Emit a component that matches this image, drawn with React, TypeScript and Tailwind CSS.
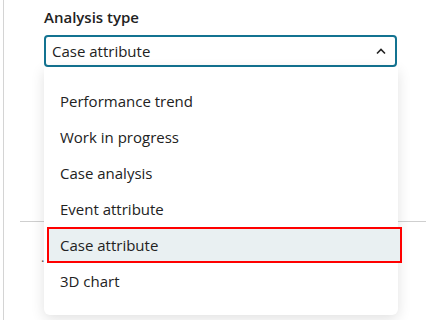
const options = [
  "Performance trend",
  "Work in progress",
  "Case analysis",
  "Event attribute",
  "Case attribute",
  "3D chart",
];

export default function App() {
  const selected = "Case attribute";
  return (
    <div
      className="h-[320px] w-[426px] overflow-hidden bg-white pl-[3px] text-[#222]"
      style={{ fontFamily: '"Open Sans", "Liberation Sans", sans-serif' }}
    >
      <div className="flex h-full flex-col border-l border-[#d4d4d4]">
        {/* field */}
        <div className="relative pl-[40px] pr-[29px] pt-[7px]">
          <div className="text-[15px] font-semibold leading-[20px]">Analysis type</div>
          <div className="mt-[8px] flex h-[32px] items-center justify-between rounded-[4px] border-2 border-[#137391] bg-white pl-[6px] pr-[8px]">
            <span className="text-[15px]">Case attribute</span>
            <svg width="12" height="8" viewBox="0 0 12 8" fill="none">
              <path d="M2 6.5L6 2.5L10 6.5" stroke="#222" strokeWidth="1.6" />
            </svg>
          </div>

          {/* open menu */}
          <div className="absolute left-[40px] right-[28px] top-[67px] z-10 flex h-[248px] flex-col rounded-b-[6px] bg-white pt-[16px] shadow-[0_4px_14px_rgba(0,0,0,0.12)]">
            {options.map((o) => (
              <div
                key={o}
                className={
                  o === selected
                    ? "ml-[3px] mr-[-4px] flex h-[36px] items-center border-2 border-[#ff0000] bg-[#e9f0f2] pl-[11px] text-[15px]"
                    : "flex h-[36px] items-center pl-[16px] text-[15px]"
                }
              >
                {o}
              </div>
            ))}
          </div>
        </div>

        {/* content hidden behind the menu */}
        <div className="mt-[154px] ml-[16px] border-t border-[#cfcfcf]" />
        <div className="mt-[30px] ml-[37px] text-[13px] leading-[10px] text-[#555]">.</div>
      </div>
    </div>
  );
}
